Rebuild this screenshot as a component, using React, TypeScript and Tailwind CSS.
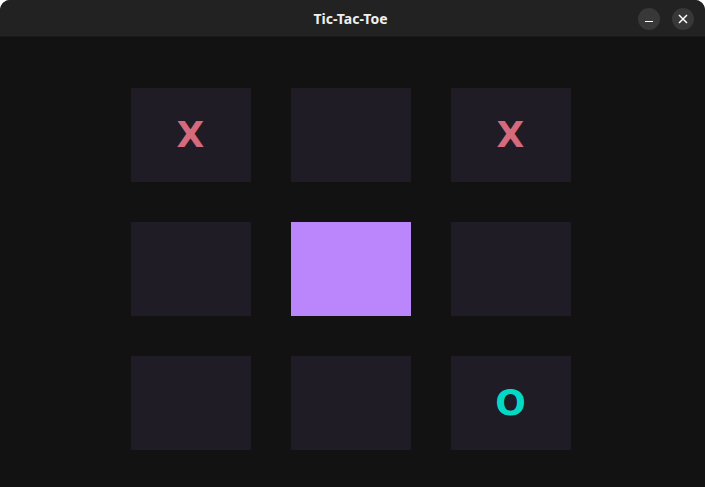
import React from "react";

const board = ["X", "", "X", "", "", "", "", "", "O"];

export default function App() {
  return (
    <div className="w-[705px] h-[487px] bg-[#121212] overflow-hidden rounded-t-[10px] flex flex-col" style={{ fontFamily: '"DejaVu Sans", "Noto Sans", sans-serif' }}>
      <div className="h-[37px] bg-[#222222] flex items-center justify-center relative shrink-0 border-b border-[#1a1a1a]">
        <span className="text-[#f0f0f0] text-[14px] font-bold mr-[4px]" style={{ fontFamily: '"Noto Sans", sans-serif' }}>Tic-Tac-Toe</span>
        <div className="absolute right-[11px] top-[8px] flex gap-[12px]">
          <div className="w-[22px] h-[22px] rounded-full bg-[#383838] flex items-center justify-center">
            <div className="w-[8px] h-[1.5px] bg-white mt-[5px]" />
          </div>
          <div className="w-[22px] h-[22px] rounded-full bg-[#383838] flex items-center justify-center">
            <svg width="10" height="10" viewBox="0 0 10 10">
              <path d="M1 1L9 9M9 1L1 9" stroke="white" strokeWidth="1.5" />
            </svg>
          </div>
        </div>
      </div>
      <div className="flex-1 flex justify-center pt-[51px] pr-[4px]">
        <div className="grid grid-cols-[120px_120px_120px] grid-rows-[94px_94px_94px] gap-[40px] h-fit">
          {board.map((v, i) => (
            <div
              key={i}
              className={`flex items-center justify-center ${i === 4 ? "bg-[#bb86fc]" : "bg-[#1f1c26]"}`}
            >
              {v === "X" && <span className="text-[#d56a7c] text-[36px] font-bold leading-none">X</span>}
              {v === "O" && <span className="text-[#03dac6] text-[36px] font-bold leading-none">O</span>}
            </div>
          ))}
        </div>
      </div>
    </div>
  );
}
